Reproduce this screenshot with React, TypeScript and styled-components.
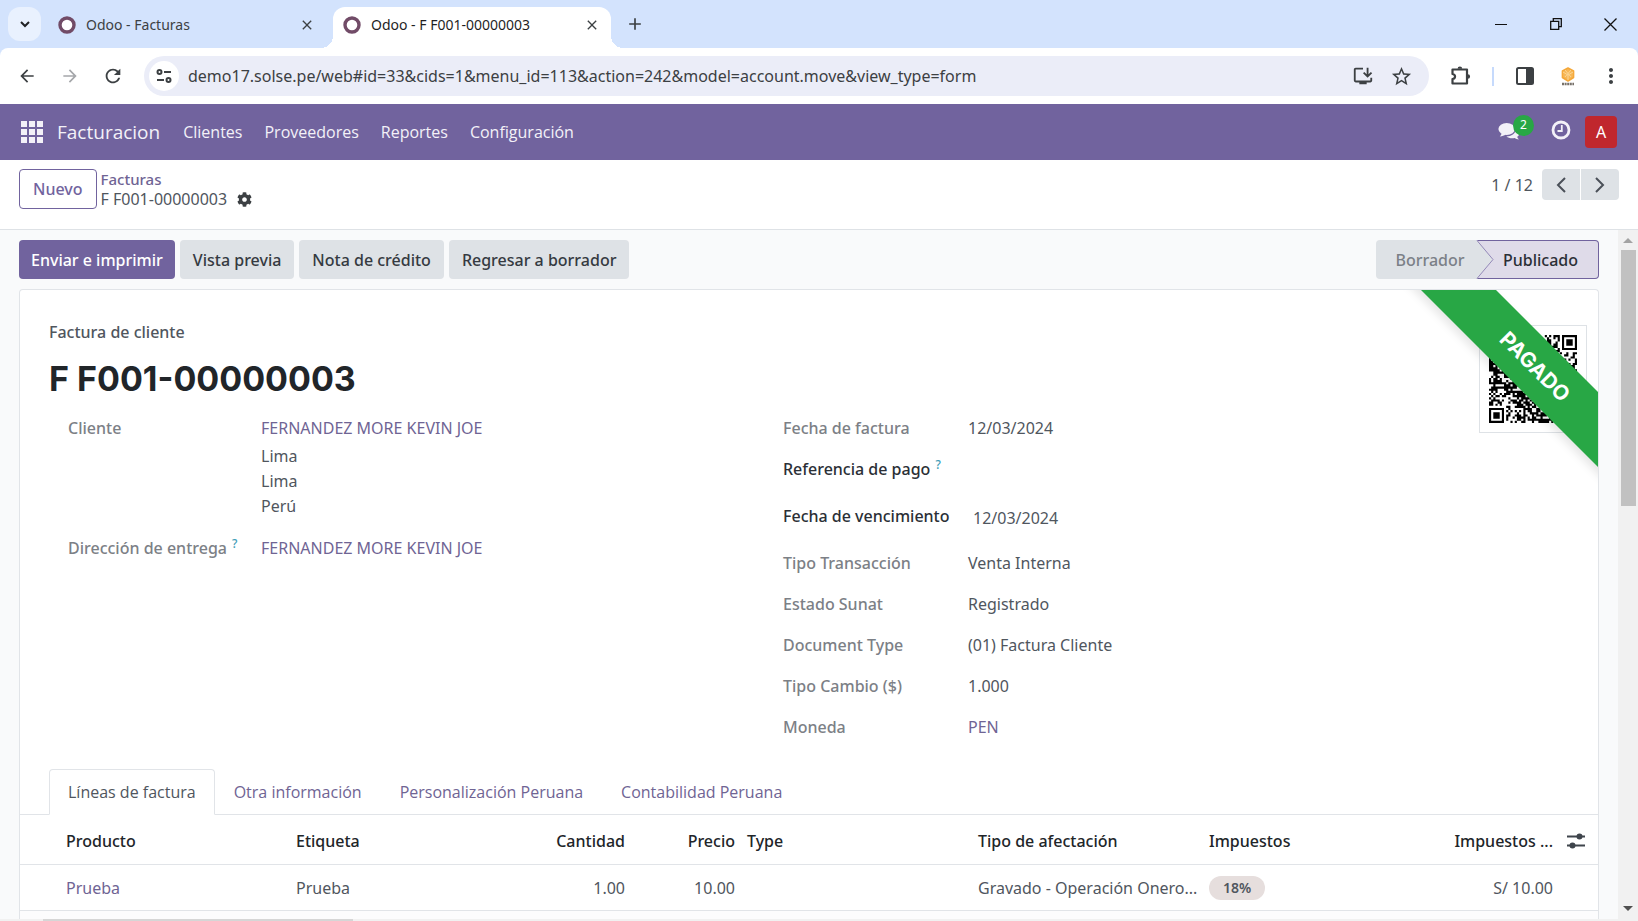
import React from "react";
import styled, { createGlobalStyle, css } from "styled-components";
import {
  MdArrowBack,
  MdArrowForward,
  MdRefresh,
  MdStarBorder,
  MdOutlineInstallDesktop,
  MdMoreVert,
  MdClose,
  MdAdd,
} from "react-icons/md";
import { FaCog } from "react-icons/fa";

const PURPLE = "#71639e";
const LINK = "#6f6494";
const GRAY = "#dee2e6";
const TEXT = "#50565e";
const LINE = "#e1e4e8";

const GlobalStyle = createGlobalStyle`
  *, *::before, *::after { box-sizing: border-box; }
  body {
    margin: 0;
    font-family: "Noto Sans", "Open Sans", sans-serif;
    font-size: 16px;
    line-height: 24px;
    color: ${TEXT};
    background: #fff;
  }
  button, input { font: inherit; color: inherit; }
  button { border: 0; background: none; padding: 0; cursor: pointer; }
  a { text-decoration: none; color: ${LINK}; }
`;

const Screen = styled.div`
  display: flex;
  flex-direction: column;
  height: 100vh;
  overflow: hidden;
  background: #d3e3fd;
`;

/* ---------- browser frame ---------- */

const TabStrip = styled.header`
  display: flex;
  align-items: flex-end;
  flex: none;
  height: 48px;
  padding-left: 8px;
`;

const TabSearch = styled.button`
  display: grid;
  place-items: center;
  width: 33px;
  height: 34px;
  margin-bottom: 7px;
  border-radius: 12px;
  background: #e9f1fe;
  color: #202124;
`;

const BrowserTab = styled.div<{ $active?: boolean }>`
  position: relative;
  display: flex;
  align-items: center;
  gap: 10px;
  width: 278px;
  height: 41px;
  padding: 0 11px 6px 10px;
  border-radius: 12px 12px 0 0;
  font-size: 14px;
  color: #3c4043;
  ${(p) =>
    p.$active &&
    css`
      margin-left: 7px;
      background: #fff;
      color: #1f1f1f;
      &::before,
      &::after {
        content: "";
        position: absolute;
        bottom: 0;
        width: 12px;
        height: 12px;
      }
      &::before {
        left: -12px;
        background: radial-gradient(circle at 0 0, transparent 12px, #fff 12px);
      }
      &::after {
        right: -12px;
        background: radial-gradient(circle at 100% 0, transparent 12px, #fff 12px);
      }
    `}
`;

const InactiveTab = styled(BrowserTab)`
  margin-left: 7px;
`;

const TabTitle = styled.span`
  flex: 1;
  white-space: nowrap;
`;

const IconButton = styled.button`
  display: grid;
  place-items: center;
  flex: none;
  color: #3c4043;
`;

const NewTab = styled(IconButton)`
  width: 28px;
  height: 28px;
  margin: 0 0 10px 10px;
`;

const WindowControls = styled.div`
  display: flex;
  align-self: stretch;
  margin-left: auto;
  color: #111;
`;

const WindowButton = styled.button`
  display: grid;
  place-items: center;
  width: 55px;
`;

const Toolbar = styled.div`
  display: flex;
  align-items: center;
  flex: none;
  height: 56px;
  padding: 0 15px;
  border-radius: 8px 8px 0 0;
  background: #fff;
`;

const NavButtons = styled.div`
  display: flex;
  gap: 19px;
  margin-right: 19px;
`;

const NavButton = styled(IconButton)<{ $dim?: boolean }>`
  width: 24px;
  height: 24px;
  color: ${(p) => (p.$dim ? "#a5a7aa" : "#3c4043")};
`;

const AddressBar = styled.div`
  display: flex;
  align-items: center;
  flex: 1;
  height: 40px;
  padding: 0 16px 0 5px;
  border-radius: 20px;
  background: #ebedf8;
`;

const SiteInfo = styled.button`
  display: grid;
  place-items: center;
  width: 30px;
  height: 30px;
  border-radius: 50%;
  background: #fff;
`;

const UrlInput = styled.input`
  flex: 1;
  min-width: 0;
  margin-left: 9px;
  padding: 0;
  border: 0;
  outline: 0;
  background: none;
  color: #3c4043;
`;

const AddressIcons = styled.div`
  display: flex;
  gap: 16px;
`;

const ToolIcons = styled.div`
  display: flex;
  align-items: center;
  gap: 19px;
  margin-left: 20px;
`;

const ToolButton = styled(IconButton)`
  width: 24px;
  height: 24px;
`;

const ToolDivider = styled.span`
  width: 2px;
  height: 19px;
  background: #c6dafc;
`;

/* ---------- application bar ---------- */

const AppBar = styled.nav`
  display: flex;
  align-items: center;
  flex: none;
  height: 56px;
  padding: 0 21px;
  background: ${PURPLE};
  color: #f3f1f8;
`;

const AppsButton = styled.button`
  display: grid;
  grid-template-columns: repeat(3, 6px);
  gap: 2px;
  margin-right: 14px;
`;

const AppDot = styled.span`
  height: 6px;
  background: #f3f1f8;
`;

const Brand = styled.a`
  margin-right: 23px;
  font-family: "Open Sans", sans-serif;
  font-size: 19px;
  color: inherit;
`;

const MenuList = styled.div`
  display: flex;
  gap: 22px;
  font-family: "Open Sans", sans-serif;
`;

const Systray = styled.div`
  display: flex;
  align-items: center;
  margin-left: auto;
`;

const MessagesButton = styled.button`
  position: relative;
  display: block;
  height: 22px;
  margin-right: 31px;
`;

const Badge = styled.span`
  position: absolute;
  left: 15px;
  top: -6px;
  width: 21px;
  height: 21px;
  border-radius: 50%;
  background: #28a745;
  color: #fff;
  font-size: 12px;
  line-height: 20px;
`;

const ClockButton = styled.button`
  display: block;
  height: 24px;
  margin-right: 14px;
`;

const Avatar = styled.button`
  width: 32px;
  height: 32px;
  border-radius: 4px;
  background: #c0272d;
  color: #fff;
`;

/* ---------- control panel ---------- */

const ControlPanel = styled.div`
  display: flex;
  align-items: flex-start;
  flex: none;
  height: 70px;
  padding: 9px 19px;
  border-bottom: 1px solid ${GRAY};
  background: #fff;
`;

const NewButton = styled.button`
  height: 40px;
  padding: 0 13px;
  border: 1px solid ${PURPLE};
  border-radius: 4px;
  color: ${PURPLE};
  font-weight: 500;
`;

const Breadcrumb = styled.div`
  flex: 1;
  margin-left: 4px;
  line-height: 20px;
`;

const BreadcrumbParent = styled.a`
  display: block;
  font-size: 15px;
  font-weight: 500;
`;

const BreadcrumbCurrent = styled.div`
  display: flex;
  align-items: center;
  gap: 10px;
`;

const Pager = styled.div`
  display: flex;
  align-items: center;
  gap: 1px;
`;

const PagerCount = styled.span`
  margin-right: 8px;
`;

const PagerButton = styled.button<{ $side: "left" | "right" }>`
  display: grid;
  place-items: center;
  width: 38px;
  height: 31px;
  background: ${GRAY};
  border-radius: ${(p) => (p.$side === "left" ? "4px 0 0 4px" : "0 4px 4px 0")};
`;

/* ---------- form area ---------- */

const Workspace = styled.div`
  display: flex;
  flex: 1;
  min-height: 0;
`;

const FormView = styled.main`
  display: flex;
  flex-direction: column;
  flex: 1;
  min-width: 0;
  overflow: hidden;
  padding: 10px 19px 0;
  background: #f9fafb;
`;

const StatusBar = styled.div`
  display: flex;
  align-items: center;
  flex: none;
  gap: 5px;
  margin-bottom: 10px;
`;

const ActionButton = styled.button<{ $primary?: boolean }>`
  height: 39px;
  padding: 0 ${(p) => (p.$primary ? 12 : 13)}px;
  border-radius: 4px;
  font-weight: 500;
  background: ${(p) => (p.$primary ? PURPLE : GRAY)};
  color: ${(p) => (p.$primary ? "#fff" : "#353a41")};
`;

const Steps = styled.div`
  position: relative;
  display: flex;
  margin-left: auto;
`;

const Step = styled.button<{ $current?: boolean }>`
  height: 39px;
  font-weight: 500;
  ${(p) =>
    p.$current
      ? css`
          width: 122px;
          padding-left: 6px;
          border: 1px solid ${PURPLE};
          border-left: 0;
          border-radius: 0 4px 4px 0;
          background: #dfdbe9;
          color: #2b2f36;
        `
      : css`
          width: 101px;
          padding-left: 7px;
          border-radius: 4px 0 0 4px;
          background: ${GRAY};
          color: #7b8087;
        `}
`;

const StepArrow = styled.svg`
  position: absolute;
  left: 100px;
  top: 0;
`;

const Sheet = styled.section`
  position: relative;
  flex: 1 0 auto;
  overflow: hidden;
  padding-top: 30px;
  border: 1px solid ${LINE};
  border-bottom: 0;
  border-radius: 4px 4px 0 0;
  background: #fff;
`;

const DocumentKind = styled.div`
  padding-left: 29px;
  font-weight: 500;
`;

const DocumentName = styled.h1`
  margin: 13px 0 15px;
  padding-left: 29px;
  font-family: Inter, sans-serif;
  font-size: 34px;
  font-weight: 700;
  line-height: 44px;
  color: #212529;
`;

const FieldGroups = styled.div`
  display: grid;
  grid-template-columns: 1fr 1fr;
  height: 353px;
  padding: 0 100px 0 48px;
`;

const FieldGroup = styled.dl<{ $label: number }>`
  display: grid;
  grid-template-columns: ${(p) => p.$label}px 1fr;
  align-content: start;
  margin: 0;
`;

const FieldLabel = styled.dt<{ $strong?: boolean }>`
  height: ${(p) => (p.$strong ? 47 : 41)}px;
  font-weight: 500;
  color: ${(p) => (p.$strong ? "#2b2f36" : "#7c8086")};
  white-space: nowrap;
`;

const FieldValue = styled.dd<{ $inset?: boolean }>`
  margin: 0;
  padding-left: ${(p) => (p.$inset ? 5 : 0)}px;
  padding-top: ${(p) => (p.$inset ? 2 : 0)}px;
`;

const Help = styled.sup`
  margin-left: 5px;
  font-size: 12px;
  line-height: 12px;
  color: #3f9db8;
`;

const Address = styled.div`
  padding: 4px 0 17px;
  line-height: 25px;
`;

const QrFrame = styled.div`
  position: absolute;
  right: 11px;
  top: 35px;
  width: 108px;
  height: 108px;
  padding: 9px;
  border: 1px solid ${GRAY};
  background: #fff;
`;

const Ribbon = styled.div`
  position: absolute;
  right: -87px;
  top: 50px;
  width: 300px;
  height: 53px;
  transform: rotate(45deg);
  background: #28a745;
  box-shadow: 0 5px 10px rgba(0, 0, 0, 0.1);
  color: #fff;
  font-family: Inter, sans-serif;
  font-size: 21px;
  font-weight: 700;
  line-height: 53px;
  text-align: center;
`;

/* ---------- notebook ---------- */

const Tabs = styled.div`
  display: flex;
  padding-left: 29px;
  border-bottom: 1px solid ${LINE};
`;

const Tab = styled.button<{ $active?: boolean }>`
  height: 46px;
  margin-bottom: -1px;
  padding: 0 18px;
  border: 1px solid ${(p) => (p.$active ? LINE : "transparent")};
  border-bottom-color: ${(p) => (p.$active ? "#fff" : "transparent")};
  border-radius: 4px 4px 0 0;
  font-family: "Open Sans", sans-serif;
  color: ${(p) => (p.$active ? TEXT : LINK)};
`;

const Lines = styled.table`
  width: 100%;
  table-layout: fixed;
  border-collapse: collapse;
  white-space: nowrap;

  th,
  td {
    padding: 0 6px;
    border-bottom: 1px solid ${LINE};
    text-align: left;
  }
  th {
    height: 49px;
    padding-top: 3px;
    font-weight: 500;
    color: #212529;
  }
  td {
    height: 46px;
    padding-top: 1px;
  }
  th:first-child,
  td:first-child {
    padding-left: 46px;
  }
  th:last-child {
    padding-left: 8px;
  }
  th.num,
  td.num {
    text-align: right;
  }
`;

const TaxTag = styled.span`
  display: inline-block;
  height: 24px;
  padding: 0 14px;
  border-radius: 12px;
  background: #e6dedd;
  font-size: 14px;
  font-weight: 600;
`;

const NextRow = styled.div`
  height: 20px;
  background: #fcfcfd;
`;

/* ---------- scroll bar ---------- */

const ScrollTrack = styled.div`
  display: flex;
  flex-direction: column;
  align-items: center;
  flex: none;
  width: 20px;
  padding: 8px 0;
  background: #f1f1f1;
`;

const ScrollThumb = styled.div`
  width: 15px;
  height: 38%;
  margin: 7px 0 auto;
  background: #c1c1c1;
`;

const Arrow = styled.span<{ $down?: boolean }>`
  border: 5px solid transparent;
  ${(p) =>
    p.$down
      ? css`
          border-top-color: #505050;
          border-bottom: 0;
        `
      : css`
          border-bottom-color: #a3a3a3;
          border-top: 0;
        `}
`;

const WindowEdge = styled.footer`
  flex: none;
  height: 2px;
  padding-left: 43px;
  background: #f1f1f1;
`;

const StatusBubble = styled.div`
  width: 310px;
  height: 2px;
  background: #d6d6d6;
`;

/* ---------- drawings ---------- */

const Favicon = () => (
  <svg width="18" height="18" viewBox="0 0 18 18" aria-hidden="true">
    <circle cx="9" cy="9" r="7" fill="#fff" stroke="#714b67" strokeWidth="3.4" />
  </svg>
);

const SiteInfoIcon = () => (
  <svg width="16" height="16" viewBox="0 0 16 16" fill="none" stroke="#3c4043" strokeWidth="2" aria-hidden="true">
    <circle cx="3.5" cy="4" r="2" />
    <path d="M8 4h7M1 12h7" />
    <circle cx="12.5" cy="12" r="2" />
  </svg>
);

const ExtensionIcon = () => (
  <svg width="24" height="24" viewBox="0 0 24 24" aria-hidden="true">
    <path
      d="M3.500 5.500H18v14H3.500v-4.500c3.400-.6 3.400-4.400 0-5z"
      fill="none"
      stroke="#3c4043"
      strokeWidth="2.200"
      strokeLinejoin="round"
    />
    <path d="M8.600 4.800a2.300 2.300 0 0 1 4.600 0zM18.800 10.200a2.300 2.300 0 0 1 0 4.600z" fill="#3c4043" />
  </svg>
);

const SidePanelIcon = () => (
  <svg width="18" height="18" viewBox="0 0 18 18" aria-hidden="true">
    <rect x="1" y="1" width="16" height="16" rx="1.5" fill="none" stroke="#3c4043" strokeWidth="2" />
    <rect x="10" y="1" width="7" height="16" fill="#3c4043" />
  </svg>
);

const ProfileIcon = () => (
  <svg width="18" height="20" viewBox="0 0 18 20" aria-hidden="true">
    <path d="M9 2l5.600 3v6.500L9 15l-5.600-3.500V5z" fill="#f7b756" stroke="#f5a83a" strokeWidth="1.500" strokeLinejoin="round" />
    <path d="M4 6l5 3 5-3M9 9v5M6 4l6 7M12 4l-6 7" stroke="#fbd594" fill="none" />
    <path d="M3 18h12" stroke="#77716a" strokeWidth="2.500" strokeDasharray="2 0.600" />
  </svg>
);

const CommentsIcon = () => (
  <svg width="22" height="22" viewBox="0 0 22 22" fill="#f3f1f8" aria-hidden="true">
    <path d="M18 8.500c2 .8 3.200 2.200 3.200 3.900 0 1.400-.8 2.500-2 3.400.2 1.200.9 1.900 1.700 2.600-1.700 0-3.200-.5-4.300-1.400-3 .6-6.200.1-8.200-1.500 5-.2 9-3 9.600-7z" />
    <ellipse cx="8.700" cy="8" rx="8.300" ry="6" />
    <path d="M3.500 11c.3 2-.4 3.300-1.700 4.400 2.400-.1 4.500-.9 6-2.200z" />
  </svg>
);

const ClockIcon = () => (
  <svg width="20" height="20" viewBox="0 0 20 20" fill="none" stroke="#f3f1f8" aria-hidden="true">
    <circle cx="10" cy="10" r="8" strokeWidth="2.800" />
    <path d="M10.800 5v6H6.500" strokeWidth="1.800" />
  </svg>
);

const Chevron = ({ d }: { d: string }) => (
  <svg width="12" height="18" viewBox="0 0 12 18" fill="none" stroke="#4a5058" strokeWidth="2" aria-hidden="true">
    <path d={d} />
  </svg>
);

const SlidersIcon = () => (
  <svg width="18" height="16" viewBox="0 0 18 16" stroke="#3f454c" strokeWidth="2" fill="#3f454c" aria-hidden="true">
    <path d="M0 3.500h18M0 12.500h18" />
    <circle cx="12.500" cy="3.500" r="2" />
    <circle cx="5.500" cy="12.500" r="2" />
  </svg>
);

const QR_SIZE = 41;

function qrPath(): string {
  let seed = 77;
  const random = () => {
    seed = (seed * 1103515245 + 12345) % 2147483648;
    return seed / 2147483648;
  };
  const ring = (dx: number, dy: number) => Math.max(Math.abs(dx), Math.abs(dy));
  const corners = [
    [3, 3],
    [QR_SIZE - 4, 3],
    [3, QR_SIZE - 4],
  ];
  let path = "";
  for (let y = 0; y < QR_SIZE; y++) {
    for (let x = 0; x < QR_SIZE; x++) {
      let dark = random() > 0.48;
      for (const [cx, cy] of corners) {
        const r = ring(x - cx, y - cy);
        if (r <= 4) dark = r === 3 || r <= 1;
      }
      if (dark) path += `M${x} ${y}h1v1h-1z`;
    }
  }
  return path;
}

const QrCode = () => (
  <svg width="88" height="88" viewBox={`0 0 ${QR_SIZE} ${QR_SIZE}`} role="img" aria-label="QR">
    <path d={qrPath()} fill="#000" />
  </svg>
);

/* ---------- data ---------- */

const menus = ["Clientes", "Proveedores", "Reportes", "Configuración"];
const actions = ["Enviar e imprimir", "Vista previa", "Nota de crédito", "Regresar a borrador"];
const notebook = ["Líneas de factura", "Otra información", "Personalización Peruana", "Contabilidad Peruana"];

type Field = { label: string; value: React.ReactNode; strong?: boolean; help?: boolean; inset?: boolean };

const invoiceFields: Field[] = [
  { label: "Fecha de factura", value: "12/03/2024" },
  { label: "Referencia de pago", value: "", strong: true, help: true },
  { label: "Fecha de vencimiento", value: "12/03/2024", strong: true, inset: true },
  { label: "Tipo Transacción", value: "Venta Interna" },
  { label: "Estado Sunat", value: "Registrado" },
  { label: "Document Type", value: "(01) Factura Cliente" },
  { label: "Tipo Cambio ($)", value: "1.000" },
  { label: "Moneda", value: <a href="#moneda">PEN</a> },
];

export default function App() {
  return (
    <Screen>
      <GlobalStyle />
      <TabStrip>
        <TabSearch aria-label="Buscar pestañas">
          <svg width="10" height="7" viewBox="0 0 10 7" fill="none" stroke="currentColor" strokeWidth="2">
            <path d="M1 1l4 4 4-4" />
          </svg>
        </TabSearch>
        <InactiveTab>
          <Favicon />
          <TabTitle>Odoo - Facturas</TabTitle>
          <IconButton aria-label="Cerrar pestaña"><MdClose size={16} /></IconButton>
        </InactiveTab>
        <BrowserTab $active>
          <Favicon />
          <TabTitle>Odoo - F F001-00000003</TabTitle>
          <IconButton aria-label="Cerrar pestaña"><MdClose size={16} /></IconButton>
        </BrowserTab>
        <NewTab aria-label="Nueva pestaña"><MdAdd size={20} /></NewTab>
        <WindowControls>
          <WindowButton aria-label="Minimizar">
            <svg width="12" height="12" viewBox="0 0 12 12" stroke="currentColor"><path d="M0 6.500h12" /></svg>
          </WindowButton>
          <WindowButton aria-label="Restaurar">
            <svg width="12" height="12" viewBox="0 0 12 12" fill="none" stroke="currentColor" strokeWidth="1.300">
              <path d="M0.700 3.300h8v8h-8zM3.300 3.300V0.700h8v8H8.700" />
            </svg>
          </WindowButton>
          <WindowButton aria-label="Cerrar">
            <svg width="13" height="13" viewBox="0 0 13 13" stroke="currentColor" strokeWidth="1.300"><path d="M0.500 0.500l12 12M12.500 0.500l-12 12" /></svg>
          </WindowButton>
        </WindowControls>
      </TabStrip>

      <Toolbar>
        <NavButtons>
          <NavButton aria-label="Atrás"><MdArrowBack size={20} /></NavButton>
          <NavButton aria-label="Adelante" $dim><MdArrowForward size={20} /></NavButton>
          <NavButton aria-label="Recargar"><MdRefresh size={22} /></NavButton>
        </NavButtons>
        <AddressBar>
          <SiteInfo aria-label="Información del sitio"><SiteInfoIcon /></SiteInfo>
          <UrlInput
            aria-label="Dirección"
            defaultValue="demo17.solse.pe/web#id=33&cids=1&menu_id=113&action=242&model=account.move&view_type=form"
          />
          <AddressIcons>
            <IconButton aria-label="Instalar"><MdOutlineInstallDesktop size={22} /></IconButton>
            <IconButton aria-label="Favorito"><MdStarBorder size={23} /></IconButton>
          </AddressIcons>
        </AddressBar>
        <ToolIcons>
          <ToolButton aria-label="Extensiones"><ExtensionIcon /></ToolButton>
          <ToolDivider />
          <ToolButton aria-label="Panel lateral"><SidePanelIcon /></ToolButton>
          <ToolButton aria-label="Perfil"><ProfileIcon /></ToolButton>
          <ToolButton aria-label="Menú"><MdMoreVert size={24} /></ToolButton>
        </ToolIcons>
      </Toolbar>

      <AppBar>
        <AppsButton aria-label="Aplicaciones">
          {Array.from({ length: 9 }, (_, i) => <AppDot key={i} />)}
        </AppsButton>
        <Brand href="#facturacion">Facturacion</Brand>
        <MenuList>
          {menus.map((m) => <button key={m}>{m}</button>)}
        </MenuList>
        <Systray>
          <MessagesButton aria-label="Mensajes"><CommentsIcon /><Badge>2</Badge></MessagesButton>
          <ClockButton aria-label="Actividades"><ClockIcon /></ClockButton>
          <Avatar>A</Avatar>
        </Systray>
      </AppBar>

      <ControlPanel>
        <NewButton>Nuevo</NewButton>
        <Breadcrumb>
          <BreadcrumbParent href="#facturas">Facturas</BreadcrumbParent>
          <BreadcrumbCurrent>
            F F001-00000003
            <IconButton aria-label="Acciones"><FaCog size={15} /></IconButton>
          </BreadcrumbCurrent>
        </Breadcrumb>
        <Pager>
          <PagerCount>1 / 12</PagerCount>
          <PagerButton $side="left" aria-label="Anterior"><Chevron d="M10 2L3 9l7 7" /></PagerButton>
          <PagerButton $side="right" aria-label="Siguiente"><Chevron d="M2 2l7 7-7 7" /></PagerButton>
        </Pager>
      </ControlPanel>

      <Workspace>
        <FormView>
          <StatusBar>
            {actions.map((a, i) => <ActionButton key={a} $primary={i === 0}>{a}</ActionButton>)}
            <Steps>
              <Step>Borrador</Step>
              <Step $current>Publicado</Step>
              <StepArrow width="18" height="39" viewBox="0 0 18 39" aria-hidden="true">
                <path d="M0 0h1l16 19.500L1 39H0z" fill={GRAY} />
                <path d="M1 0.500l16 19L1 38.500" fill="none" stroke="#9388b8" />
              </StepArrow>
            </Steps>
          </StatusBar>

          <Sheet>
            <DocumentKind>Factura de cliente</DocumentKind>
            <DocumentName>F F001-00000003</DocumentName>

            <FieldGroups>
              <FieldGroup $label={193}>
                <FieldLabel>Cliente</FieldLabel>
                <FieldValue>
                  <a href="#cliente">FERNANDEZ MORE KEVIN JOE</a>
                  <Address>Lima<br />Lima<br />Perú</Address>
                </FieldValue>
                <FieldLabel>Dirección de entrega<Help>?</Help></FieldLabel>
                <FieldValue><a href="#entrega">FERNANDEZ MORE KEVIN JOE</a></FieldValue>
              </FieldGroup>
              <FieldGroup $label={185}>
                {invoiceFields.map((f) => (
                  <React.Fragment key={f.label}>
                    <FieldLabel $strong={f.strong}>
                      {f.label}
                      {f.help && <Help>?</Help>}
                    </FieldLabel>
                    <FieldValue $inset={f.inset}>{f.value}</FieldValue>
                  </React.Fragment>
                ))}
              </FieldGroup>
            </FieldGroups>

            <Tabs role="tablist">
              {notebook.map((t, i) => (
                <Tab key={t} role="tab" aria-selected={i === 0} $active={i === 0}>{t}</Tab>
              ))}
            </Tabs>

            <Lines>
              <colgroup>
                <col width="270" />
                <col />
                <col width="110" />
                <col width="110" />
                <col />
                <col />
                <col />
                <col width="125" />
                <col width="39" />
              </colgroup>
              <thead>
                <tr>
                  <th>Producto</th>
                  <th>Etiqueta</th>
                  <th className="num">Cantidad</th>
                  <th className="num">Precio</th>
                  <th>Type</th>
                  <th>Tipo de afectación</th>
                  <th>Impuestos</th>
                  <th className="num">Impuestos ...</th>
                  <th><IconButton aria-label="Columnas"><SlidersIcon /></IconButton></th>
                </tr>
              </thead>
              <tbody>
                <tr>
                  <td><a href="#prueba">Prueba</a></td>
                  <td>Prueba</td>
                  <td className="num">1.00</td>
                  <td className="num">10.00</td>
                  <td />
                  <td>Gravado - Operación Onero...</td>
                  <td><TaxTag>18%</TaxTag></td>
                  <td className="num">S/ 10.00</td>
                  <td />
                </tr>
              </tbody>
            </Lines>
            <NextRow />

            <QrFrame><QrCode /></QrFrame>
            <Ribbon>PAGADO</Ribbon>
          </Sheet>
        </FormView>
        <ScrollTrack>
          <Arrow />
          <ScrollThumb />
          <Arrow $down />
        </ScrollTrack>
      </Workspace>
      <WindowEdge><StatusBubble /></WindowEdge>
    </Screen>
  );
}
